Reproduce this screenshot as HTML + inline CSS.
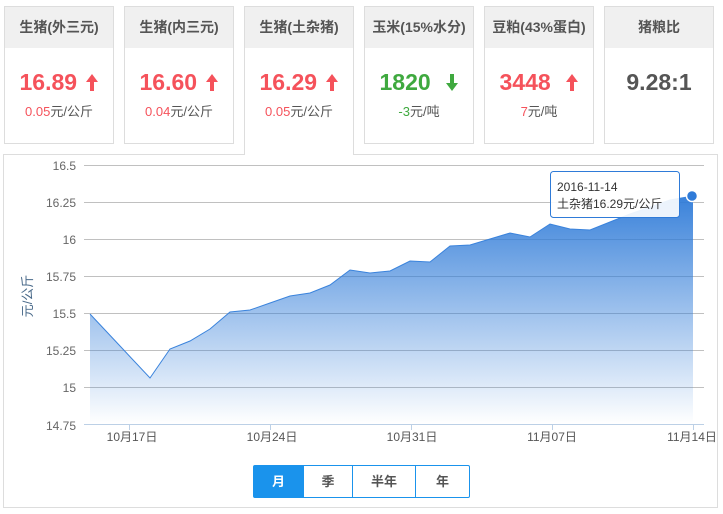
<!DOCTYPE html>
<html><head><meta charset="utf-8"><style>
*{margin:0;padding:0;box-sizing:border-box}
body{width:723px;height:514px;background:#fff;font-family:"Liberation Sans","Noto Sans CJK SC",sans-serif;position:relative;overflow:hidden}
.card{position:absolute;top:6px;width:110px;height:138px;border:1px solid #ddd;background:#fff}
.card .h{height:41px;background:#f0f0f0;color:#555;font-weight:bold;font-size:14px;text-align:center;line-height:41px}
.card .v{text-align:center;font-size:23px;font-weight:bold;margin-top:19px;line-height:30px}
.card .v svg{vertical-align:-1px;margin-left:3px}
.card .s{text-align:center;font-size:13px;color:#555;margin-top:4px}
.red{color:#f5525b}.green{color:#3fa93f}
.card.act{height:149px;border-bottom:none;z-index:2}
.panel{position:absolute;left:3px;top:154px;width:715px;height:354px;border:1px solid #ddd}
.btns{position:absolute;left:253px;top:465px;display:flex;border:1px solid #1a93ec;border-radius:2px;height:33px}
.btns div{width:49px;text-align:center;line-height:31px;font-size:13px;color:#555;font-weight:bold;border-left:1px solid #1a93ec}
.btns div:first-child{border-left:none;background:#1a93ec;color:#fff}
.btns div:nth-child(3){width:63px}.btns div:nth-child(4){width:54px}
</style></head><body>
<div class="card" style="left:4px"><div class="h">生猪(外三元)</div><div class="v red">16.89 <svg width="12" height="17"><path d="M6,0 L12,8 L8,8 L8,17 L4,17 L4,8 L0,8 Z" fill="#f5525b"/></svg></div><div class="s"><span class="red">0.05</span>元/公斤</div></div>
<div class="card" style="left:124px"><div class="h">生猪(内三元)</div><div class="v red">16.60 <svg width="12" height="17"><path d="M6,0 L12,8 L8,8 L8,17 L4,17 L4,8 L0,8 Z" fill="#f5525b"/></svg></div><div class="s"><span class="red">0.04</span>元/公斤</div></div>
<div class="card act" style="left:244px"><div class="h">生猪(土杂猪)</div><div class="v red">16.29 <svg width="12" height="17"><path d="M6,0 L12,8 L8,8 L8,17 L4,17 L4,8 L0,8 Z" fill="#f5525b"/></svg></div><div class="s"><span class="red">0.05</span>元/公斤</div></div>
<div class="card" style="left:364px"><div class="h">玉米(15%水分)</div><div class="v green">1820 &nbsp;<svg width="12" height="17"><path d="M6,17 L12,9 L8,9 L8,0 L4,0 L4,9 L0,9 Z" fill="#3fa93f"/></svg></div><div class="s"><span class="green">-3</span>元/吨</div></div>
<div class="card" style="left:484px"><div class="h">豆粕(43%蛋白)</div><div class="v red">3448 &nbsp;<svg width="12" height="17"><path d="M6,0 L12,8 L8,8 L8,17 L4,17 L4,8 L0,8 Z" fill="#f5525b"/></svg></div><div class="s"><span class="red">7</span>元/吨</div></div>
<div class="card" style="left:604px"><div class="h">猪粮比</div><div class="v" style="color:#555">9.28:1</div></div>
<div class="panel"></div>
<svg style="position:absolute;left:0;top:0" width="723" height="514">
<defs><linearGradient id="g" x1="0" y1="0" x2="0" y2="1"><stop offset="0" stop-color="#2f7bd8" stop-opacity=".95"/><stop offset="1" stop-color="#2f7bd8" stop-opacity="0"/></linearGradient></defs>
<g stroke="#c0c0c0" stroke-width="1">
<line x1="84" y1="165.5" x2="704" y2="165.5"/><line x1="84" y1="202.5" x2="704" y2="202.5"/><line x1="84" y1="239.5" x2="704" y2="239.5"/><line x1="84" y1="276.5" x2="704" y2="276.5"/><line x1="84" y1="313.5" x2="704" y2="313.5"/><line x1="84" y1="350.5" x2="704" y2="350.5"/><line x1="84" y1="387.5" x2="704" y2="387.5"/>
</g>
<path d="M90,314 L150,378 L170,349 L190,341 L210,329 L230,312 L250,310 L270,303 L290,296 L310,293 L330,285 L350,270 L370,273 L390,271 L410,261 L430,262 L450,246 L470,245 L490,239 L510,233 L530,237 L550,224 L570,229 L590,230 L610,222 L630,214 L650,207 L670,200 L693,196 L693,424 L90,424 Z" fill="url(#g)"/>
<path d="M90,314 L150,378 L170,349 L190,341 L210,329 L230,312 L250,310 L270,303 L290,296 L310,293 L330,285 L350,270 L370,273 L390,271 L410,261 L430,262 L450,246 L470,245 L490,239 L510,233 L530,237 L550,224 L570,229 L590,230 L610,222 L630,214 L650,207 L670,200 L693,196" fill="none" stroke="#3a83dc" stroke-width="1"/>
<line x1="84" y1="424.5" x2="704" y2="424.5" stroke="#bcd0e6"/>
<g stroke="#bcd0e6"><line x1="129.5" y1="424" x2="129.5" y2="430"/><line x1="270.5" y1="424" x2="270.5" y2="430"/><line x1="411.5" y1="424" x2="411.5" y2="430"/><line x1="552.5" y1="424" x2="552.5" y2="430"/><line x1="693.5" y1="424" x2="693.5" y2="430"/></g>
<g font-size="12" fill="#666" text-anchor="end" font-family="Liberation Sans,sans-serif">
<text x="76" y="170">16.5</text><text x="76" y="207">16.25</text><text x="76" y="244">16</text><text x="76" y="281">15.75</text><text x="76" y="318">15.5</text><text x="76" y="355">15.25</text><text x="76" y="392">15</text><text x="76" y="430">14.75</text></g>
<g font-size="12" fill="#555" text-anchor="middle" font-family="Liberation Sans,Noto Sans CJK SC,sans-serif">
<text x="132" y="441">10月17日</text><text x="272" y="441">10月24日</text><text x="412" y="441">10月31日</text><text x="552" y="441">11月07日</text><text x="692" y="441">11月14日</text></g>
<text transform="translate(32,296) rotate(-90)" text-anchor="middle" font-size="13" fill="#4a6a8a" font-family="Liberation Sans,Noto Sans CJK SC,sans-serif">元/公斤</text>
<circle cx="692" cy="196" r="5.5" fill="#2f7bd8" stroke="#fff" stroke-width="1.5"/>
<rect x="550.5" y="171.5" width="129" height="46" rx="3" fill="#fff" fill-opacity=".9" stroke="#2f7bd8"/>
<text x="557" y="191" font-size="12" fill="#333" font-family="Liberation Sans,sans-serif">2016-11-14</text>
<text x="557" y="208" font-size="12" fill="#333" font-family="Liberation Sans,Noto Sans CJK SC,sans-serif">土杂猪16.29元/公斤</text>
</svg>
<div class="btns"><div>月</div><div>季</div><div>半年</div><div>年</div></div>
</body></html>
